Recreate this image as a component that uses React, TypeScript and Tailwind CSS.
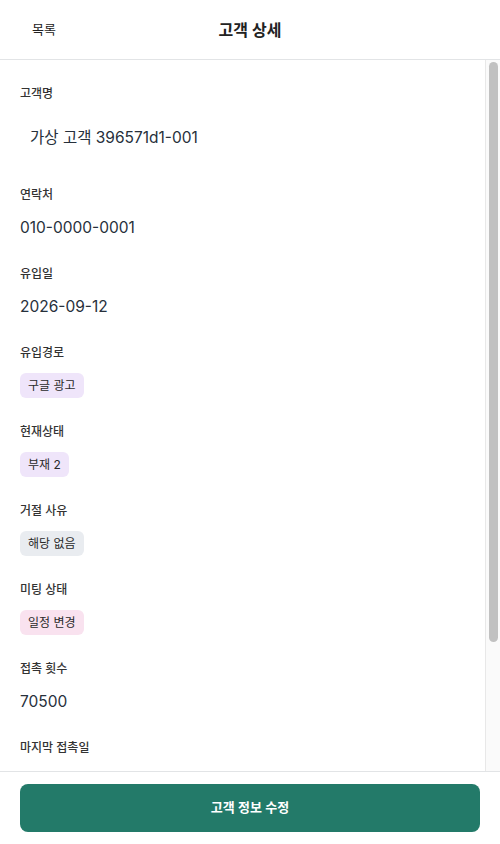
const font = "font-['Inter','Noto_Sans_CJK_KR',sans-serif]";

type Field =
  | { label: string; kind: "text"; value: string }
  | { label: string; kind: "badge"; value: string; tone: "purple" | "gray" | "pink" };

const fields: Field[] = [
  { label: "연락처", kind: "text", value: "010-0000-0001" },
  { label: "유입일", kind: "text", value: "2026-09-12" },
  { label: "유입경로", kind: "badge", value: "구글 광고", tone: "purple" },
  { label: "현재상태", kind: "badge", value: "부재 2", tone: "purple" },
  { label: "거절 사유", kind: "badge", value: "해당 없음", tone: "gray" },
  { label: "미팅 상태", kind: "badge", value: "일정 변경", tone: "pink" },
  { label: "접촉 횟수", kind: "text", value: "70500" },
  { label: "마지막 접촉일", kind: "text", value: "2026-10-03" },
  { label: "메모", kind: "text", value: "-" },
];

const toneClass = {
  purple: "bg-[#efe5fa]",
  gray: "bg-[#e9ecf0]",
  pink: "bg-[#f9e2ef]",
};

export default function App() {
  return (
    <div className={`${font} h-[844px] w-full flex flex-col bg-white text-[#1f2933]`}>
      <header className="h-[60px] shrink-0 border-b border-[#e2e4e6] flex items-center relative">
        <button className="ml-[32px] text-[13px] text-[#222]">목록</button>
        <h1 className="absolute left-1/2 -translate-x-1/2 text-[16px] font-semibold text-[#222]">
          고객 상세
        </h1>
      </header>

      <div className="relative flex-1 min-h-0">
        <main className="h-full overflow-y-auto [scrollbar-width:none] pl-[20px] pr-[35px] pt-[24px] pb-[36px]">
          <div className="pb-[24px]">
            <p className="text-[12px] leading-[20px] font-medium text-[#333]">고객명</p>
            <div className="mt-[10px] h-[47px] px-[10px] flex items-center text-[15.5px] text-[#27303b]">
              가상 고객 396571d1-001
            </div>
          </div>

          {fields.map((f) => (
            <div key={f.label} className="pb-[24px]">
              <p className="text-[12px] leading-[20px] font-medium text-[#333]">{f.label}</p>
              <div className="mt-[10px] h-[25px] flex items-center">
                {f.kind === "text" ? (
                  <span className="text-[15.5px] text-[#27303b]">{f.value}</span>
                ) : (
                  <span
                    className={`${toneClass[f.tone]} h-[25px] px-[8px] rounded-[6px] inline-flex items-center text-[12px] text-[#2a2a2a]`}
                  >
                    {f.value}
                  </span>
                )}
              </div>
            </div>
          ))}
        </main>

        {/* 스크롤바 (스크린샷 환경에선 숨겨지므로 직접 그림) */}
        <div aria-hidden className="absolute top-0 right-0 bottom-0 w-[15px] bg-[#fafafa] border-l border-[#e8e8e8]">
          <div className="absolute left-[3px] top-[2px] w-[9px] h-[580px] rounded-full bg-[#c1c1c1]" />
        </div>
      </div>

      <footer className="shrink-0 h-[73px] border-t border-[#e2e4e6] px-[20px] pt-[12px]">
        <button className="w-full h-[48px] rounded-[8px] bg-[#237a69] text-white text-[13px] font-semibold">
          고객 정보 수정
        </button>
      </footer>
    </div>
  );
}
